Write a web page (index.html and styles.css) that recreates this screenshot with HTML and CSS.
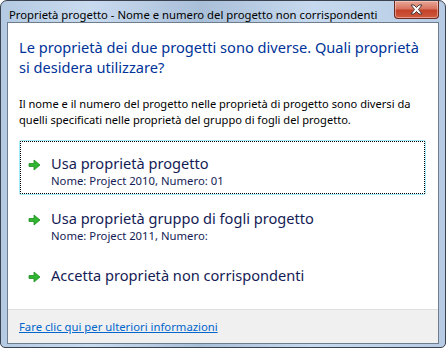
FILE: index.html
```html
<!DOCTYPE html>
<html lang="it">
<head>
  <meta charset="UTF-8">
  <title>Proprietà progetto</title>
  <link rel="stylesheet" href="styles.css">
</head>
<body>
  <div class="window">
    <div class="titlebar">
      <span class="title">Proprietà progetto - Nome e numero del progetto non corrispondenti</span>
      <button class="close" aria-label="Chiudi">
        <svg width="15" height="11" viewBox="0 0 15 11">
          <path d="M2 1 L5 1 L7.5 3.5 L10 1 L13 1 L9.5 5.5 L13 10 L10 10 L7.5 7.5 L5 10 L2 10 L5.5 5.5 Z" fill="#fff" stroke="#4a3a3a" stroke-width="1" stroke-linejoin="round"/>
        </svg>
      </button>
    </div>

    <div class="client">
      <div class="content">
        <h1 class="instruction">Le proprietà dei due progetti sono diverse. Quali proprietà si desidera utilizzare?</h1>
        <p class="body-text">Il nome e il numero del progetto nelle proprietà di progetto sono diversi da quelli specificati nelle proprietà del gruppo di fogli del progetto.</p>

        <div class="links">
          <a class="cmd focused" href="#">
            <svg class="arrow" width="13" height="12" viewBox="0 0 13 12">
              <path d="M1 4.5 H6 V1 L12 6 L6 11 V7.5 H1 Z" fill="#2fb52f" stroke="#1e8e1e" stroke-width="0.8" stroke-linejoin="round"/>
            </svg>
            <span class="cmd-text">
              <span class="cmd-title">Usa proprietà progetto</span>
              <span class="cmd-sub">Nome: Project 2010, Numero: 01</span>
            </span>
          </a>
          <a class="cmd" href="#">
            <svg class="arrow" width="13" height="12" viewBox="0 0 13 12">
              <path d="M1 4.5 H6 V1 L12 6 L6 11 V7.5 H1 Z" fill="#2fb52f" stroke="#1e8e1e" stroke-width="0.8" stroke-linejoin="round"/>
            </svg>
            <span class="cmd-text">
              <span class="cmd-title">Usa proprietà gruppo di fogli progetto</span>
              <span class="cmd-sub">Nome: Project 2011, Numero:</span>
            </span>
          </a>
          <a class="cmd" href="#">
            <svg class="arrow" width="13" height="12" viewBox="0 0 13 12">
              <path d="M1 4.5 H6 V1 L12 6 L6 11 V7.5 H1 Z" fill="#2fb52f" stroke="#1e8e1e" stroke-width="0.8" stroke-linejoin="round"/>
            </svg>
            <span class="cmd-text">
              <span class="cmd-title">Accetta proprietà non corrispondenti</span>
            </span>
          </a>
        </div>
      </div>

      <div class="footer">
        <a class="more" href="#">Fare clic qui per ulteriori informazioni</a>
      </div>
    </div>
  </div>
</body>
</html>
```

FILE: styles.css
```css
body {
  margin: 0;
  font-family: "Noto Sans", "Open Sans", sans-serif;
  background: #ffffff;
}

.window {
  width: 446px;
  height: 348px;
  box-sizing: border-box;
  border: 1px solid #39424e;
  border-radius: 7px 7px 5px 5px;
  background: linear-gradient(90deg, #b4cae2 0%, #c9dbef 20%, #a9bfd8 45%, #c6d9ee 70%, #b7cce4 100%);
  display: flex;
  flex-direction: column;
  overflow: hidden;
}

.titlebar {
  height: 28px;
  display: flex;
  align-items: flex-start;
  justify-content: space-between;
  padding-left: 8px;
}

.title {
  font-size: 11.3px;
  color: #000000;
  margin-top: 6px;
  white-space: nowrap;
}

.close {
  width: 45px;
  height: 18px;
  margin: 0 6px 0 0;
  padding: 0;
  border: 1px solid #6b2a22;
  border-top: none;
  border-radius: 0 0 4px 4px;
  background: linear-gradient(#e8a899 0%, #d8745f 45%, #c3422a 55%, #cf5a3e 100%);
  box-shadow: inset 0 0 0 1px rgba(255, 220, 210, 0.5);
  display: flex;
  align-items: center;
  justify-content: center;
}

.client {
  flex: 1;
  margin: 0 6px 6px;
  border: 1px solid #6e7d8e;
  background: #ffffff;
  display: flex;
  flex-direction: column;
}

.content {
  flex: 1;
  padding: 14px 11px 0;
}

.instruction {
  margin: 0;
  font-size: 14.6px;
  font-weight: normal;
  line-height: 20px;
  color: #003399;
}

.body-text {
  margin: 19px 0 0;
  font-size: 11.1px;
  line-height: 16px;
  color: #000000;
}

.links {
  margin-top: 12px;
  display: flex;
  flex-direction: column;
}

.cmd {
  display: flex;
  align-items: flex-start;
  gap: 10px;
  padding: 12px 10px 0 8px;
  height: 55px;
  box-sizing: border-box;
  text-decoration: none;
  border: 1px solid transparent;
  margin-right: 1px;
}

.cmd + .cmd {
  height: 57px;
  padding-top: 12px;
}

.cmd.focused {
  border: 1px solid #a6ecf8;
  outline: 1px dotted #000000;
  outline-offset: -2px;
  border-radius: 2px;
}

.arrow {
  margin-top: 6px;
  flex-shrink: 0;
}

.cmd-text {
  display: flex;
  flex-direction: column;
}

.cmd-title {
  font-size: 14.6px;
  line-height: 20px;
  color: #151c55;
}

.cmd-sub {
  font-size: 11.3px;
  line-height: 16px;
  color: #151c55;
}

.footer {
  height: 33px;
  border-top: 1px solid #dfdfdf;
  background: #f0f0f0;
  padding: 0 11px;
  display: flex;
  align-items: center;
}

.more {
  font-size: 11.3px;
  color: #0066cc;
  text-decoration: underline;
}
```
